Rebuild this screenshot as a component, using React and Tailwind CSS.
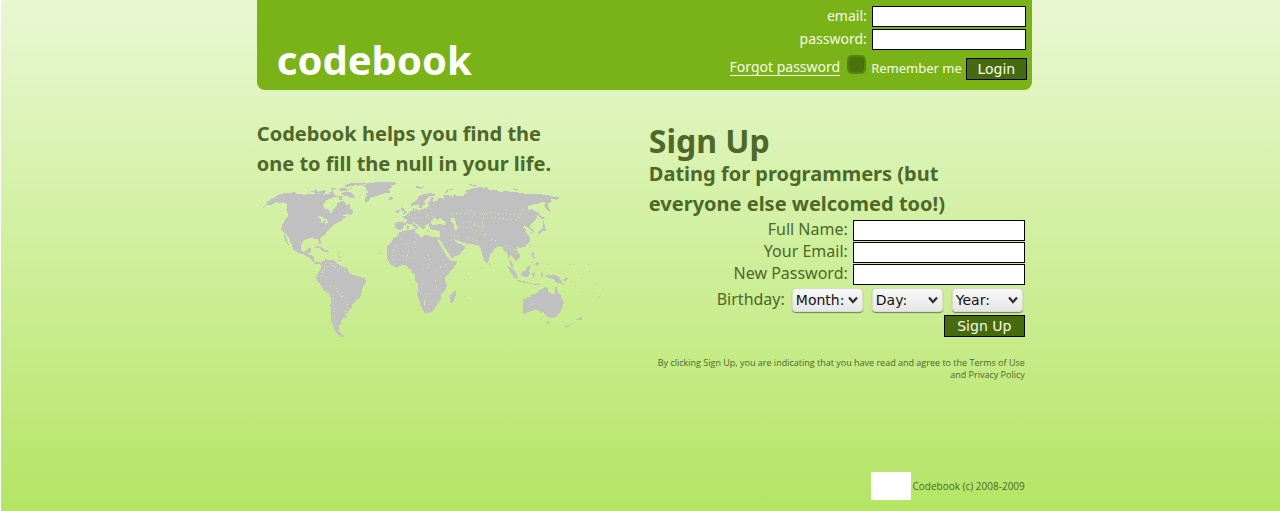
const fieldClass = "border border-black bg-white px-1 text-sm text-black outline-none";

function WorldMap() {
  return (
    <svg viewBox="6 6 1056 480" className="mt-[1px] block h-auto w-[352px] max-w-full" shapeRendering="crispEdges" role="img" aria-label="World map">
      <g fill="#c0c0c0">
        <path d="M25 89L35 78L35 70L50 66L48 60L60 60L70 50L90 45L120 43L125 48L150 50L164 47L185 49L210 50L212 46L225 49L240 50L249 56L234 56L230 63L215 65L205 80L207 90L222 96L225 104L231 104L234 93L244 86L247 76L262 68L270 72L273 80L285 79L286 92L295 98L295 104L286 110L274 108L264 113L276 117L264 122L262 127L245 135L235 141L226 152L218 157L212 168L199 178L194 182L199 195L193 197L188 182L165 181L154 184L145 188L138 199L138 214L144 222L154 219L158 211L168 211L167 222L158 228L176 234L176 248L184 253L197 252L195 257L181 257L171 248L162 238L150 234L146 229L132 226L115 215L111 202L106 190L101 177L88 164L79 157L80 144L90 126L98 118L99 107L94 96L97 82L91 75L83 73L72 75L63 72L50 81L35 81Z" />
        <path d="M87 169L94 175L95 188L101 200L96 198L89 182Z" />
        <path d="M169 39L183 36L190 41L208 36L216 42L206 45L217 48L200 50L191 46L180 52L181 44L169 42ZM222 42L236 38L233 45L240 49L230 52ZM228 31L244 29L241 34L230 36ZM252 33L264 29L282 34L271 39L255 38ZM267 24L288 15L316 14L302 20L293 25L284 23L272 29ZM257 46L274 40L285 42L297 53L299 60L286 60L278 55L264 52ZM251 54L264 55L260 63L270 67L253 67ZM281 28L293 30L287 34ZM304 18L325 13L337 15L325 20L305 24Z" />
        <path d="M328 22L338 16L361 13L401 12L425 14L421 20L408 22L414 27L404 31L401 41L391 45L377 50L362 55L350 58L344 64L339 73L329 72L329 60L335 54L333 47L341 42L334 36L333 26L320 25ZM391 39H405V45H391ZM400 59L414 57L416 63L404 66ZM481 26L489 24L495 29L508 23L505 29L495 32L482 29Z" />
        <path d="M180 204L195 206L204 212L214 218L204 219L194 211L181 208ZM209 216L224 218L222 222L207 221ZM193 188H199V197H193ZM198 205H202V211H198ZM249 222H252V228H249ZM251 232L260 238L255 243ZM247 246L257 246L253 250ZM372 225H378V228H372Z" />
        <path d="M195 257L204 247L213 243L224 247L238 247L246 256L262 264L275 270L282 280L284 287L300 292L317 297L331 302L333 314L321 331L319 350L312 361L303 367L293 377L290 389L281 399L277 407L270 406L275 419L262 422L256 430L262 436L251 442L254 450L250 457L258 468L266 474L269 478L260 476L246 468L239 458L235 445L229 426L228 402L226 381L229 360L221 346L207 337L197 321L184 303L184 296L190 283L199 271Z" />
        <path d="M398 204L411 191L414 181L425 176L433 163L454 157L474 154L481 156L480 164L490 168L493 174L501 181L506 172L516 171L523 175L543 177L548 180L549 188L560 209L569 222L575 235L586 246L594 250L607 247L604 257L597 267L585 282L571 299L572 315L576 321L572 336L559 350L557 366L545 381L539 393L524 405L508 405L503 394L495 380L492 364L486 348L490 329L487 313L480 307L480 290L471 283L468 275L458 269L456 262L440 262L424 269L410 263L403 253L396 239L397 221L394 213Z" />
        <path d="M604 333L604 346L594 373L586 374L584 358L589 347L596 342Z" />
        <path d="M420 140L421 134L435 131L445 132L450 136L458 125L446 122L443 116L455 112L463 101L472 97L474 89L482 94L493 96L506 92L517 88L521 80L519 74L525 66L531 56L536 59L535 71L547 69L550 59L563 62L569 57L560 53L579 51L593 56L599 46L603 55L617 54L627 54L630 44L636 49L632 38L651 32L666 29L678 27L684 30L696 27L705 37L723 36L736 42L755 39L770 42L787 43L802 46L821 48L847 48L877 51L889 55L911 58L912 64L900 65L894 62L886 66L891 72L879 76L879 84L887 98L886 103L875 95L868 82L871 73L862 72L846 77L829 81L820 85L820 95L832 94L842 103L847 112L843 125L833 134L824 144L828 153L839 158L836 163L824 153L819 147L807 144L803 149L815 153L811 160L818 168L824 178L824 190L812 205L798 209L787 208L784 216L794 228L794 239L783 250L775 239L765 231L763 242L772 257L775 270L768 266L763 249L759 235L756 224L746 217L742 207L731 204L720 211L713 220L704 233L702 248L696 256L688 249L683 233L677 211L666 201L650 198L625 195L613 190L601 185L596 181L604 193L611 199L618 198L632 207L628 215L614 228L599 237L588 241L584 229L568 209L558 190L549 183L556 172L554 159L540 156L527 154L521 144L523 136L512 141L510 151L502 152L493 145L479 135L472 131L482 143L491 150L483 153L469 139L458 136L447 143L443 153L434 156L422 153Z" />
        <path d="M467 84L467 78L478 72L488 62L494 53L507 49L524 45L540 49L538 55L522 54L514 65L508 71L512 79L503 82L501 91L494 91L490 79L484 80L476 83ZM440 96L438 91L444 86L450 99L455 104L444 109L447 101ZM424 97L434 96L432 104L424 106ZM471 154L484 154L479 160ZM457 145H461V153H457ZM516 157L525 158L523 162ZM571 44L575 36L595 31L596 34L580 37L579 43ZM640 18L654 20L668 23L659 26L642 21ZM773 31L789 32L791 36L772 34Z" />
        <path d="M840 100L849 103L856 113L864 117L870 123L860 124L854 117L846 110ZM865 128L870 141L872 158L862 159L854 169L848 166L853 159L863 149ZM825 197H829V205H825ZM826 163L836 166L831 169Z" />
        <path d="M757 265L768 268L784 286L788 303L776 298L768 285ZM786 306L805 309L820 313L811 315L789 310ZM822 314H831V318H822ZM837 316L846 318L852 315V320H837ZM799 284L811 276L819 264L827 265L822 277L825 286L818 298L804 295L798 291ZM829 287L841 281L837 287L844 291L837 295L838 301L832 301L834 293ZM859 284H863V298H859ZM872 290L884 293L896 289L911 297L917 306L928 322L915 315L903 314L896 303L883 300L874 296ZM832 223L838 226L836 236L842 240L838 243L831 236ZM843 250L851 256L848 264L840 259ZM703 256L708 258L706 264L702 261ZM830 247L834 252L829 255ZM925 303L939 299L937 305L929 309Z" />
        <path d="M804 365L811 360L828 356L831 348L841 348L848 340L858 335L869 328L880 329L878 339L890 348L900 348L901 328L906 327L908 343L917 352L920 362L926 374L924 385L916 401L909 410L901 417L891 420L876 417L872 411L868 406L864 402L857 406L852 398L839 396L828 400L819 402L813 407L801 406L805 397L803 381ZM876 429L885 434L878 440ZM979 416L984 420L976 428L966 425ZM962 431L956 435L943 444L931 450L930 445L944 440Z" />
        <path d="M626 302H630V305H626ZM628 354H631V357H628ZM679 266H682V269H679ZM876 258H880V261H876ZM942 258H945V261H942ZM949 309H952V312H949ZM961 321H964V324H961ZM984 285H987V288H984ZM999 258H1002V261H999ZM1005 279H1008V282H1005ZM1020 318H1023V321H1020ZM982 342H985V345H982ZM1014 345H1017V348H1014ZM1044 333H1047V336H1044ZM1029 354H1032V360H1029Z" />
      </g>
      <g fill="#d1ef9e">
        <path d="M530 129L536 120L546 122L547 128L555 120L566 127L572 134L570 140L553 139L536 142L526 138ZM588 121L599 121L603 132L605 142L609 151L603 158L595 151L598 142L592 134L586 129Z" />
        <path d="M186 117L196 114L205 118L209 123L217 124L216 129L207 127L201 137L197 134L199 123L190 120ZM207 133L219 128L220 134L210 137ZM506 366L511 371L509 382L506 380Z" />
      </g>
      <g fill="none" stroke="#d1ef9e" strokeWidth="3">
        <path strokeDasharray="3 7" d="M208 246L215 268L205 280L190 292M225 255L240 267L250 280L262 265M190 296L210 290L219 310L225 325L240 325L250 345L264 359L277 380L272 402M234 350L236 400L240 445M252 268V280M268 269V281" />
        <path strokeDasharray="3 12" d="M430 172L445 191L465 210M411 215L411 246L440 240L457 235M423 201L435 230M480 162L483 187L481 213L475 235L470 255M506 208L526 190M507 240L525 232L522 268L495 276M460 215L455 255M545 275L542 310L548 337L530 350M500 320L525 326M495 347L530 345M510 366L530 370M561 215L555 246M572 260L550 270" />
        <path strokeDasharray="3 9" d="M462 110L475 123L490 120M478 97L485 116L499 127M495 100L517 110L524 129M510 90L515 120M524 80L532 116M590 105L629 108L648 98L665 109M681 108L709 103L756 108L803 108M690 108L681 136L690 151M709 117L741 121L765 124L790 123L803 95M600 145L643 150L662 141L684 150M680 160L702 180L720 188L734 198M624 135L648 130L675 150M565 155L587 168L614 178M640 178L666 187M748 200L760 215L780 213M759 204L768 220" />
      </g>
    </svg>
  );
}

function HeaderField({ id, label, type }) {
  return (
    <div className="flex items-center justify-end gap-[5px] pr-[1px]">
      <label htmlFor={id} className="-mt-[2px] leading-5">{label}</label>
      <input id={id} type={type} className={`h-[21px] w-[154px] ${fieldClass}`} />
    </div>
  );
}

function SignUpField({ id, label, type }) {
  return (
    <div className="flex items-center justify-end gap-[5px]">
      <label htmlFor={id} className="-mt-[3px] leading-5">{label}</label>
      <input id={id} type={type} className={`h-[21px] w-[172px] ${fieldClass}`} />
    </div>
  );
}

function DateSelect({ label }) {
  return (
    <span className="relative inline-flex">
      <select
        aria-label={label}
        className="h-6 w-[71px] appearance-none rounded border border-[#d6dccb] bg-linear-to-b from-[#f8f8f8] to-[#e6e6e6] pl-[3px] font-['DejaVu_Sans',sans-serif] text-sm leading-5 text-[#111] shadow-[0_1px_1px_#71805a]"
      >
        <option>{label}</option>
      </select>
      <svg viewBox="0 0 10 8" className="pointer-events-none absolute top-2 right-[5px] h-2 w-[10px]" fill="none" stroke="#2e2e2e" strokeWidth="2.2" aria-hidden="true">
        <path d="M1 1.5L5 6L9 1.5" />
      </svg>
    </span>
  );
}

export default function App() {
  return (
    <div className="min-h-screen border-l border-white bg-linear-to-b from-[#e9f7d2] via-[#cfef9b] to-[#b4e563] font-['Noto_Sans','DejaVu_Sans',sans-serif] text-[#4d6828]">
      <div className="ml-[20%] flex min-h-screen max-w-[775px] flex-col">
        <header className="flex justify-between rounded-b-[8px] bg-[#7ab317] pr-[5px] pb-[10px] pl-5 text-sm text-[#f6fbe8]">
          <h1 className="self-end text-[40px] leading-10 font-bold text-white">codebook</h1>
          <form className="flex flex-col gap-[2px] pt-[6px]" onSubmit={(e) => e.preventDefault()}>
            <HeaderField id="login-email" label="email:" type="email" />
            <HeaderField id="login-password" label="password:" type="password" />
            <div className="flex items-end justify-end pt-[3px]">
              <a href="#forgot" className="mr-[7px] mb-1 border-b border-current leading-4">Forgot password</a>
              <input id="remember" type="checkbox" className="mr-[5px] mb-[6px] size-[19px] appearance-none rounded-[5px] border-2 border-[#568611] bg-[#4b730c]" />
              <label htmlFor="remember" className="mr-1 text-[13px] leading-6">Remember me</label>
              <button type="submit" className="h-[22px] w-[61px] border border-black bg-[#466a0e] font-['DejaVu_Sans',sans-serif] text-sm leading-5 text-[#f6fbe8]">Login</button>
            </div>
          </form>
        </header>
        <main className="flex justify-between pt-[29px] pr-[7px]">
          <section className="w-[352px]">
            <h2 className="text-xl leading-[30px] font-bold">Codebook helps you find the<br />one to fill the null in your life.</h2>
            <WorldMap />
          </section>
          <section className="w-[376px]">
            <h2 className="pt-[3px] text-[32px] leading-[37px] font-bold">Sign Up</h2>
            <h3 className="text-xl leading-[30px] font-bold">Dating for programmers (but<br />everyone else welcomed too!)</h3>
            <form className="flex flex-col gap-[1px] pt-[1px]" onSubmit={(e) => e.preventDefault()}>
              <SignUpField id="full-name" label="Full Name:" type="text" />
              <SignUpField id="your-email" label="Your Email:" type="email" />
              <SignUpField id="new-password" label="New Password:" type="password" />
              <fieldset className="flex items-center justify-end gap-[9px] pt-[2px] pr-[2px]" aria-label="Birthday">
                <span className="-mt-[3px] -mr-[2px] leading-5">Birthday:</span>
                <DateSelect label="Month:" />
                <DateSelect label="Day:" />
                <DateSelect label="Year:" />
              </fieldset>
              <button type="submit" className="mt-[2px] h-[22px] w-[81px] self-end border border-black bg-[#466a0e] font-['DejaVu_Sans',sans-serif] text-sm leading-5 text-[#f6fbe8]">Sign Up</button>
            </form>
            <p className="pt-5 text-right font-['Open_Sans',sans-serif] text-[9px] leading-3">By clicking Sign Up, you are indicating that you have read and agree to the Terms of Use<br />and Privacy Policy</p>
          </section>
        </main>
        <footer className="mt-auto flex items-center justify-end gap-[2px] pr-[7px] pb-[11px] font-['Open_Sans',sans-serif] text-[10px]">
          <span className="h-7 w-10 bg-white" />
          <span>Codebook (c) 2008-2009</span>
        </footer>
      </div>
    </div>
  );
}
